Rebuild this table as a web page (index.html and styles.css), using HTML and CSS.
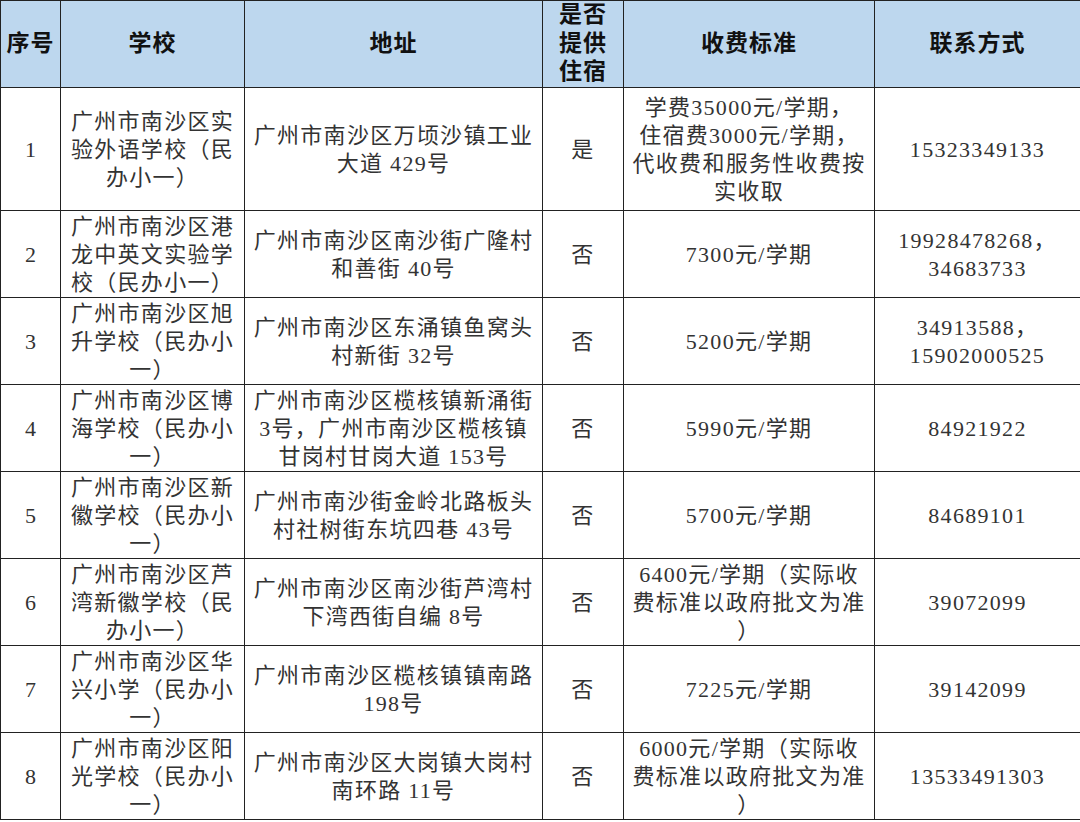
FILE: index.html
```html
<!DOCTYPE html>
<html lang="zh">
<head>
<meta charset="utf-8">
<link rel="stylesheet" href="styles.css">
</head>
<body>
<table class="tbl">
<colgroup>
<col class="c1"><col class="c2"><col class="c3"><col class="c4"><col class="c5"><col class="c6">
</colgroup>
<thead>
<tr class="head">
<th>序号</th><th>学校</th><th>地址</th><th>是否<br>提供<br>住宿</th><th>收费标准</th><th>联系方式</th>
</tr>
</thead>
<tbody>
<tr class="r4">
<td class="num">1</td><td>广州市南沙区实<br>验外语学校（民<br>办小一）</td><td>广州市南沙区万顷沙镇工业<br>大道 429号</td><td>是</td><td>学费35000元/学期，<br>住宿费3000元/学期，<br>代收费和服务性收费按<br>实收取</td><td>15323349133</td>
</tr>
<tr class="r3">
<td class="num">2</td><td>广州市南沙区港<br>龙中英文实验学<br>校（民办小一）</td><td>广州市南沙区南沙街广隆村<br>和善街 40号</td><td>否</td><td>7300元/学期</td><td>19928478268，<br>34683733</td>
</tr>
<tr class="r3">
<td class="num">3</td><td>广州市南沙区旭<br>升学校（民办小<br>一）</td><td>广州市南沙区东涌镇鱼窝头<br>村新街 32号</td><td>否</td><td>5200元/学期</td><td>34913588，<br>15902000525</td>
</tr>
<tr class="r3">
<td class="num">4</td><td>广州市南沙区博<br>海学校（民办小<br>一）</td><td>广州市南沙区榄核镇新涌街<br>3号，广州市南沙区榄核镇<br>甘岗村甘岗大道 153号</td><td>否</td><td>5990元/学期</td><td>84921922</td>
</tr>
<tr class="r3">
<td class="num">5</td><td>广州市南沙区新<br>徽学校（民办小<br>一）</td><td>广州市南沙街金岭北路板头<br>村社树街东坑四巷 43号</td><td>否</td><td>5700元/学期</td><td>84689101</td>
</tr>
<tr class="r3">
<td class="num">6</td><td>广州市南沙区芦<br>湾新徽学校（民<br>办小一）</td><td>广州市南沙区南沙街芦湾村<br>下湾西街自编 8号</td><td>否</td><td>6400元/学期（实际收<br>费标准以政府批文为准<br>）</td><td>39072099</td>
</tr>
<tr class="r3">
<td class="num">7</td><td>广州市南沙区华<br>兴小学（民办小<br>一）</td><td>广州市南沙区榄核镇镇南路<br>198号</td><td>否</td><td>7225元/学期</td><td>39142099</td>
</tr>
<tr class="r3">
<td class="num">8</td><td>广州市南沙区阳<br>光学校（民办小<br>一）</td><td>广州市南沙区大岗镇大岗村<br>南环路 11号</td><td>否</td><td>6000元/学期（实际收<br>费标准以政府批文为准<br>）</td><td>13533491303</td>
</tr>
</tbody>
</table>
</body>
</html>
```
FILE: styles.css
```css
html, body {
  margin: 0;
  padding: 0;
  background: #ffffff;
}
.tbl {
  border-collapse: collapse;
  table-layout: fixed;
  width: 1080px;
  font-family: "Liberation Serif", "Noto Sans CJK SC", serif;
  font-size: 22px;
  line-height: 27.8px;
  color: #333333;
}
.c1 { width: 60px; }
.c2 { width: 184px; }
.c3 { width: 298px; }
.c4 { width: 81px; }
.c5 { width: 251px; }
.c6 { width: 206px; }
.tbl th, .tbl td {
  border: 1.5px solid #222222;
  text-align: center;
  vertical-align: middle;
  padding: 0;
  white-space: nowrap;
  overflow: hidden;
  letter-spacing: 1.3px;
}
.tbl td {
  padding-top: 2px;
}
.tbl td.num {
  letter-spacing: 0;
}
.tbl th {
  background: #bdd7ee;
  color: #111111;
  font-weight: bold;
  font-size: 23px;
  line-height: 28.5px;
  letter-spacing: 1px;
}
.head { height: 87px; }
.r4 { height: 123px; }
.r3 { height: 87px; }
```
